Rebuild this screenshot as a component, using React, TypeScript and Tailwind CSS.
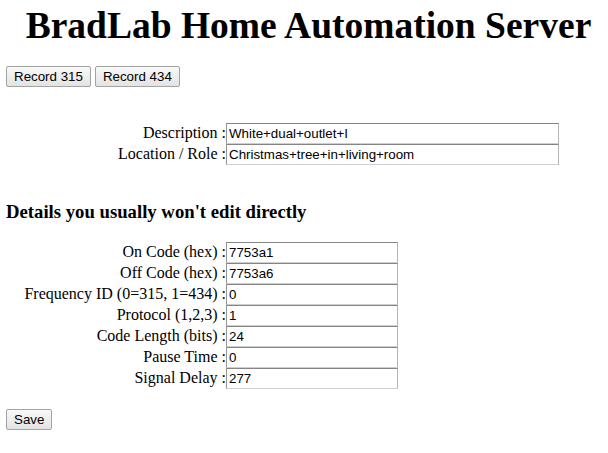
import React from "react";

const serif = { fontFamily: '"Liberation Serif", "Times New Roman", serif' };

function Btn({ children }: { children: React.ReactNode }) {
  return (
    <button
      type="button"
      className="h-[21px] px-[7px] border border-[#a3a3a3] rounded-[2px] bg-gradient-to-b from-[#f9f9f9] to-[#e3e3e3] text-[13.33px] leading-[19px] text-black font-['Liberation_Sans',Arial,sans-serif]"
    >
      {children}
    </button>
  );
}

function Row({ label, value, wide }: { label: string; value: string; wide?: boolean }) {
  return (
    <div className="flex items-start h-[21px]">
      <div className="w-[220px] shrink-0 text-right text-[16px] leading-[19px] whitespace-nowrap">{label} :</div>
      <input
        readOnly
        value={value}
        className={`${wide ? "w-[333px]" : "w-[172px]"} h-[21px] border border-[#a5a5a5] border-t-[#858585] border-l-[#959595] border-b-[#cfcfcf] border-r-[#b5b5b5] bg-white pl-[2px] text-[13.33px] text-black outline-none font-['Liberation_Sans',Arial,sans-serif]`}
      />
    </div>
  );
}

export default function App() {
  return (
    <div className="bg-white text-black w-[608px] h-[453px] pl-[6px] overflow-hidden" style={serif}>
      <h1 className="mt-[5px] pl-[3px] text-center text-[37.5px] font-bold leading-[41px] whitespace-nowrap">
        BradLab Home Automation Server
      </h1>
      <div className="mt-[20px] flex gap-[4px]">
        <Btn>Record 315</Btn>
        <Btn>Record 434</Btn>
      </div>
      <div className="mt-[36px] flex flex-col">
        <Row label="Description" value="White+dual+outlet+I" wide />
        <Row label="Location / Role" value="Christmas+tree+in+living+room" wide />
      </div>
      <h3 className="mt-[36px] text-[18.72px] font-bold leading-[21px]">Details you usually won't edit directly</h3>
      <div className="mt-[20px] flex flex-col">
        <Row label="On Code (hex)" value="7753a1" />
        <Row label="Off Code (hex)" value="7753a6" />
        <Row label="Frequency ID (0=315, 1=434)" value="0" />
        <Row label="Protocol (1,2,3)" value="1" />
        <Row label="Code Length (bits)" value="24" />
        <Row label="Pause Time" value="0" />
        <Row label="Signal Delay" value="277" />
      </div>
      <div className="mt-[18px]">
        <Btn>Save</Btn>
      </div>
    </div>
  );
}
